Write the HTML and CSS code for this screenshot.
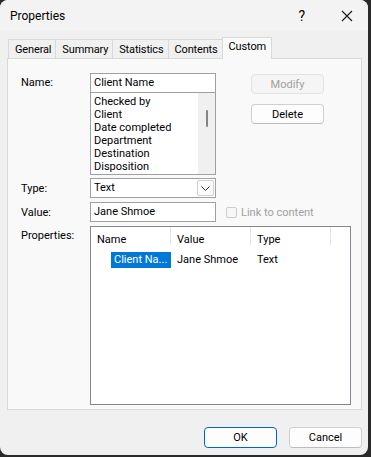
FILE: index.html
```html
<!DOCTYPE html>
<html lang="en">
<head>
    <meta charset="UTF-8">
    <meta name="viewport" content="width=device-width, initial-scale=1.0">
    <title>Properties</title>
    <link rel="stylesheet" href="styles.css">
</head>
<body>
    <div class="window">
        <div class="titlebar">
            <span class="title">Properties</span>
            <span class="help">?</span>
            <svg class="close" width="12" height="12" viewBox="0 0 12 12">
                <path d="M1 1 L11 11 M11 1 L1 11" stroke="#1a1a1a" stroke-width="1.1" fill="none"/>
            </svg>
        </div>

        <div class="content">
            <div class="tabs">
                <div class="tab">General</div>
                <div class="tab">Summary</div>
                <div class="tab">Statistics</div>
                <div class="tab">Contents</div>
                <div class="tab active">Custom</div>
            </div>

            <div class="panel">
                <div class="top">
                    <label class="lbl lbl-name">Name:</label>
                    <div class="name-col">
                        <div class="field">Client Name</div>
                        <div class="listbox">
                            <ul>
                                <li>Checked by</li>
                                <li>Client</li>
                                <li>Date completed</li>
                                <li>Department</li>
                                <li>Destination</li>
                                <li>Disposition</li>
                            </ul>
                            <div class="scrollbar"><div class="thumb"></div></div>
                        </div>
                    </div>
                    <div class="btn-col">
                        <button class="btn disabled">Modify</button>
                        <button class="btn">Delete</button>
                    </div>
                </div>

                <div class="row">
                    <label class="lbl">Type:</label>
                    <div class="field combo">
                        <span>Text</span>
                        <span class="drop">
                            <svg width="9" height="5" viewBox="0 0 9 5">
                                <path d="M0.5 0.5 L4.5 4.5 L8.5 0.5" stroke="#333" stroke-width="1" fill="none"/>
                            </svg>
                        </span>
                    </div>
                </div>

                <div class="row">
                    <label class="lbl">Value:</label>
                    <div class="field">Jane Shmoe</div>
                    <div class="check">
                        <span class="box"></span>
                        <span>Link to content</span>
                    </div>
                </div>

                <div class="row props">
                    <label class="lbl">Properties:</label>
                    <div class="listview">
                        <div class="lv-head">
                            <div class="col c1">Name</div>
                            <div class="col c2">Value</div>
                            <div class="col c3">Type</div>
                        </div>
                        <div class="lv-row">
                            <div class="col c1"><span class="sel">Client Na...</span></div>
                            <div class="col c2">Jane Shmoe</div>
                            <div class="col c3">Text</div>
                        </div>
                    </div>
                </div>
            </div>
        </div>

        <div class="footer">
            <button class="btn big default">OK</button>
            <button class="btn big">Cancel</button>
        </div>
    </div>
</body>
</html>
```

FILE: styles.css
```css
body {
    margin: 0;
    background: #2a2a2a;
    font-family: Roboto, "Noto Sans", Arial, sans-serif;
    font-size: 11px;
    color: #000;
}
.window {
    width: 368px;
    height: 455px;
    background: #f0f0f0;
    border-radius: 8px;
    overflow: hidden;
    display: flex;
    flex-direction: column;
}
.titlebar {
    height: 31px;
    background: #f3f3f3;
    display: flex;
    align-items: center;
    padding-left: 10px;
}
.title {
    flex: 1;
    font-size: 12px;
}
.help {
    font-size: 14px;
    margin-right: 36px;
}
.close {
    margin-right: 15px;
}
.content {
    padding: 6px 6px 0 7px;
}
.tabs {
    display: flex;
    align-items: flex-end;
    height: 21px;
    margin-left: 1px;
}
.tab {
    height: 19px;
    line-height: 20px;
    padding: 0 4px 0 6px;
    border: 1px solid #d9d9d9;
    border-bottom: none;
    border-right: none;
    background: #f0f0f0;
    box-sizing: border-box;
    letter-spacing: -0.15px;
}
.tab.active {
    height: 22px;
    margin-bottom: -1px;
    background: #f9f9f9;
    border-right: 1px solid #d9d9d9;
    padding: 0 5px 0 6px;
    line-height: 18px;
}
.panel {
    height: 352px;
    border: 1px solid #d9d9d9;
    background: #f9f9f9;
    box-sizing: border-box;
    padding: 14px 0 0 13px;
}
.lbl {
    width: 69px;
    flex: none;
}
.top {
    display: flex;
}
.lbl-name {
    line-height: 20px;
}
.name-col {
    width: 126px;
}
.field {
    width: 126px;
    height: 20px;
    line-height: 18px;
    border: 1px solid #a0a0a0;
    background: #fff;
    box-sizing: border-box;
    padding-left: 3px;
}
.listbox {
    height: 82px;
    border: 1px solid #a0a0a0;
    border-top: none;
    background: #fff;
    box-sizing: border-box;
    display: flex;
}
.listbox ul {
    list-style: none;
    margin: 0;
    padding: 2px 0 0 3px;
    flex: 1;
    overflow: hidden;
}
.listbox li {
    height: 13px;
    line-height: 13px;
}
.scrollbar {
    width: 17px;
    background: #f0f0f0;
    display: flex;
    justify-content: center;
}
.thumb {
    width: 2px;
    height: 17px;
    margin-top: 17px;
    background: #858585;
    border-radius: 1px;
}
.btn-col {
    margin-left: 35px;
    display: flex;
    flex-direction: column;
    gap: 10px;
    padding-top: 1px;
}
.btn {
    width: 73px;
    height: 20px;
    font-family: inherit;
    font-size: 11px;
    background: #fdfdfd;
    border: 1px solid #d0d0d0;
    border-bottom-color: #bcbcbc;
    border-radius: 4px;
    padding: 0;
    color: #000;
}
.btn.disabled {
    background: #f5f5f5;
    border-color: #e3e3e3;
    color: #a0a0a0;
}
.row {
    display: flex;
    align-items: center;
    margin-top: 3px;
}
.row + .row {
    margin-top: 4px;
}
.combo {
    display: flex;
    align-items: center;
    justify-content: space-between;
    padding-right: 1px;
}
.drop {
    width: 17px;
    height: 16px;
    border: 1px solid #cfcfcf;
    border-radius: 2px;
    box-sizing: border-box;
    display: flex;
    align-items: center;
    justify-content: center;
    background: #fbfbfb;
}
.check {
    display: flex;
    align-items: center;
    margin-left: 10px;
    color: #a0a0a0;
}
.box {
    width: 11px;
    height: 11px;
    border: 1px solid #cccccc;
    border-radius: 2px;
    box-sizing: border-box;
    margin-right: 4px;
    background: #f7f7f7;
}
.props {
    align-items: flex-start;
}
.props .lbl {
    margin-top: 3px;
}
.listview {
    width: 261px;
    height: 179px;
    border: 1px solid #828790;
    background: #fff;
    box-sizing: border-box;
}
.lv-head, .lv-row {
    display: flex;
}
.lv-head {
    height: 25px;
}
.col {
    width: 80px;
    padding-left: 6px;
    box-sizing: border-box;
    white-space: nowrap;
    overflow: hidden;
}
.lv-head .col {
    height: 25px;
    line-height: 25px;
    position: relative;
}
.lv-head .col::after {
    content: "";
    position: absolute;
    right: 0;
    top: 0;
    height: 18px;
    width: 1px;
    background: #e5e5e5;
}
.lv-row {
    height: 16px;
    line-height: 16px;
}
.lv-row .c1 {
    padding-left: 20px;
}
.sel {
    display: block;
    background: #0078d7;
    color: #fff;
    padding-left: 3px;
}
.footer {
    flex: 1;
    display: flex;
    justify-content: flex-end;
    align-items: flex-start;
    gap: 12px;
    padding: 17px 6px 0 0;
}
.btn.big {
    width: 73px;
    height: 21px;
}
.btn.default {
    border: 1px solid #0067c0;
}
```
